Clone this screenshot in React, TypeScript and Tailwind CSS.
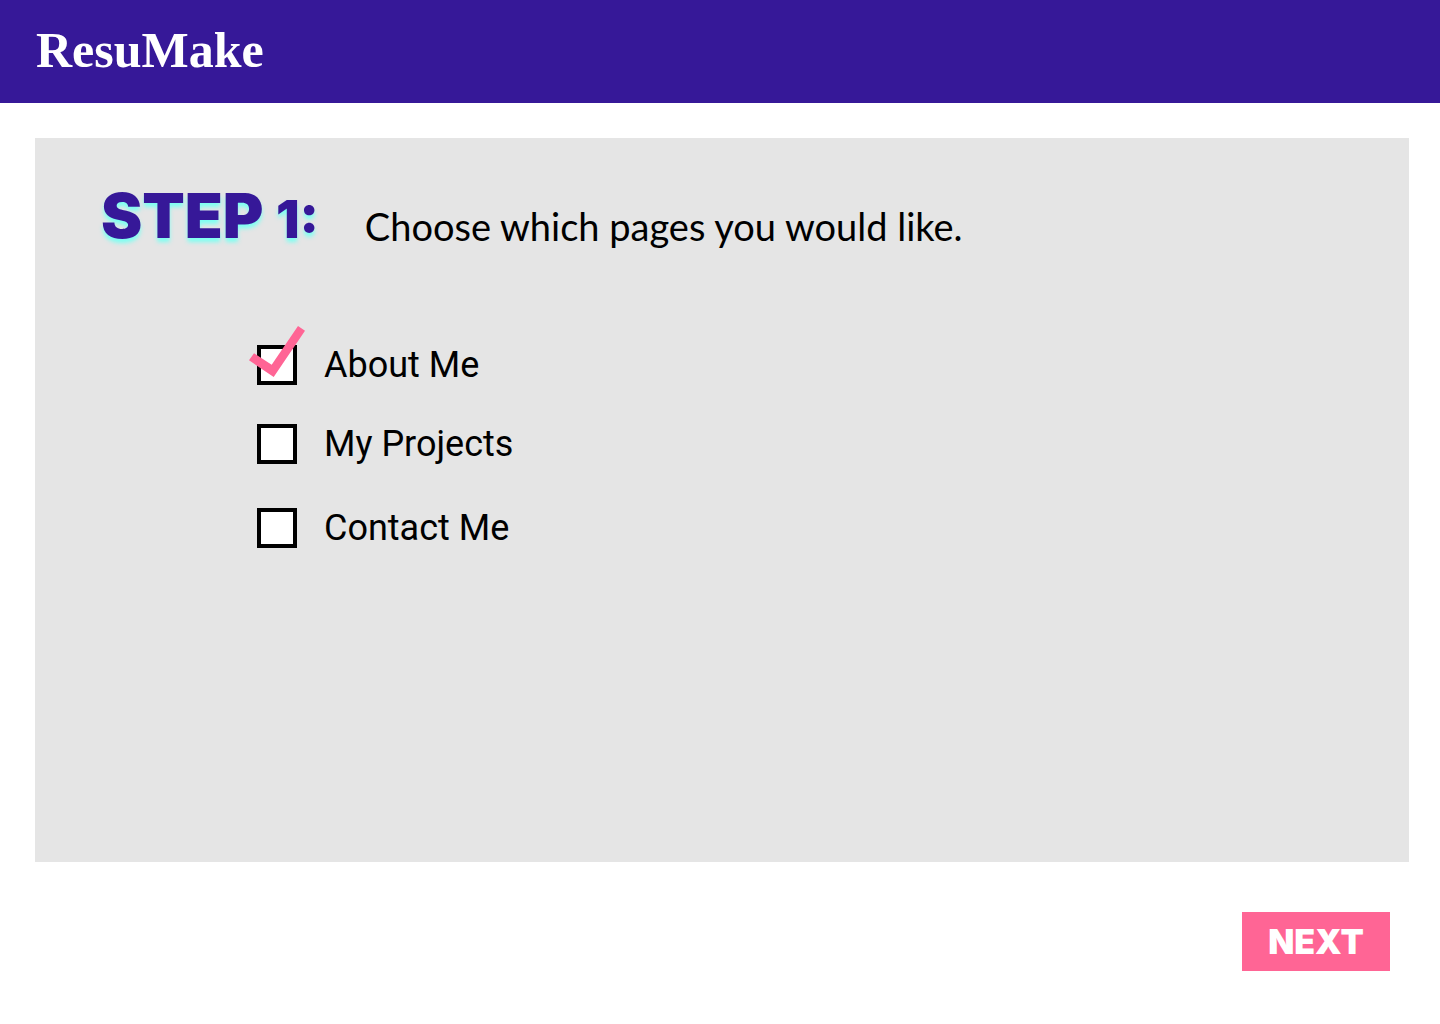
import { useState } from "react";

const pages = [
  { id: "about", label: "About Me", spacing: "" },
  { id: "projects", label: "My Projects", spacing: "mt-[39px]" },
  { id: "contact", label: "Contact Me", spacing: "mt-11" },
];

type PageOptionProps = {
  id: string;
  label: string;
  spacing: string;
  checked: boolean;
  onToggle: () => void;
};

function PageOption({ id, label, spacing, checked, onToggle }: PageOptionProps) {
  return (
    <li className={spacing}>
      <label htmlFor={id} className="flex w-fit cursor-pointer items-center gap-[27px]">
        <span className="relative block size-10">
          <input
            id={id}
            type="checkbox"
            checked={checked}
            onChange={onToggle}
            className="block size-10 cursor-pointer appearance-none border-4 border-black bg-white"
          />
          {checked && (
            <svg
              viewBox="0 0 56 51"
              className="pointer-events-none absolute -left-2 -top-[19px] h-[51px] w-14 fill-[#ff6595]"
              aria-hidden="true"
            >
              <path d="M0 34.3 5 27.3 22.7 38.7 49 0 56 4.7 24.7 51Z" />
            </svg>
          )}
        </span>
        <span className="text-4xl leading-10">{label}</span>
      </label>
    </li>
  );
}

export default function App() {
  const [selected, setSelected] = useState<string[]>(["about"]);

  const toggle = (id: string) =>
    setSelected((current) =>
      current.includes(id) ? current.filter((item) => item !== id) : [...current, id],
    );

  return (
    <div className="flex min-h-screen flex-col bg-white font-['Roboto',sans-serif] text-black">
      <header className="bg-[#361898] px-9 pb-[23px] pt-5">
        <h1 className="font-['Liberation_Serif',serif] text-[50px] font-bold leading-[60px] text-white">
          ResuMake
        </h1>
      </header>

      <main className="flex grow flex-col">
        <section className="ml-[35px] mr-[31px] mt-[35px] grow bg-[#e5e5e5] px-[66px] pb-16 pt-10">
          <div className="flex flex-wrap items-end gap-x-[46px]">
            <h2 className="font-['Inter',sans-serif] text-[62px] font-black leading-[76px] text-[#361898] [text-shadow:0_4px_4px_#7dfff2]">
              STEP <span className="text-[52px] leading-none">1:</span>
            </h2>
            <p className="font-['Lato',sans-serif] text-[38px] leading-[56px]">
              Choose which pages you would like.
            </p>
          </div>
          <ul className="ml-[156px] mt-[91px]">
            {pages.map((page) => (
              <PageOption
                key={page.id}
                {...page}
                checked={selected.includes(page.id)}
                onToggle={() => toggle(page.id)}
              />
            ))}
          </ul>
        </section>

        <div className="flex justify-end pb-[53px] pr-[50px] pt-[50px]">
          <button
            type="button"
            className="min-w-[148px] cursor-pointer bg-[#ff6595] px-6 py-2 font-['Inter',sans-serif] text-[34px] font-black leading-[43px] text-white"
          >
            NEXT
          </button>
        </div>
      </main>
    </div>
  );
}
